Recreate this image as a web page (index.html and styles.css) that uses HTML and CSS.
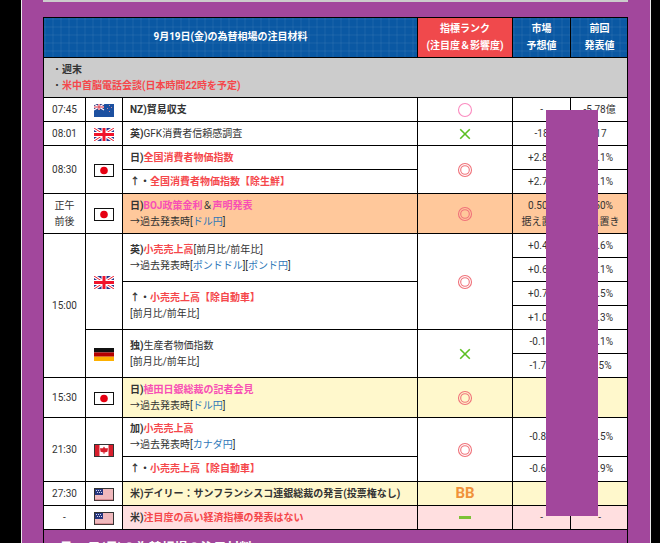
FILE: index.html
```html
<!DOCTYPE html>
<html lang="ja">
<head>
<meta charset="utf-8">
<title>為替相場の注目材料</title>
<link rel="stylesheet" href="styles.css">
</head>
<body>
<svg class="defs" width="0" height="0" aria-hidden="true">
  <defs>
    <symbol id="uk" viewBox="0 0 20 13">
      <rect width="20" height="13" fill="#27358c"/>
      <path d="M0 0L20 13M20 0L0 13" stroke="#fff" stroke-width="3.4"/>
      <path d="M0 0L20 13M20 0L0 13" stroke="#ee1c2e" stroke-width="1"/>
      <path d="M10 0V13M0 6.5H20" stroke="#fff" stroke-width="5"/>
      <path d="M10 0V13M0 6.5H20" stroke="#f0132b" stroke-width="3"/>
    </symbol>
    <symbol id="jp" viewBox="0 0 20 13">
      <rect x=".5" y=".5" width="19" height="12" fill="#fff" stroke="#111"/>
      <circle cx="10" cy="6.5" r="3.8" fill="#e60012"/>
    </symbol>
    <symbol id="nz" viewBox="0 0 20 13">
      <rect width="20" height="13" fill="#1c50a0"/>
      <rect width="10" height="6" fill="#3a3f86"/>
      <path d="M0 0L10 6M10 0L0 6" stroke="#fff" stroke-width="1.2"/>
      <path d="M5 0V6M0 3H10" stroke="#fff" stroke-width="2"/>
      <path d="M5 0V6M0 3H10" stroke="#d8283c" stroke-width="1"/>
      <path d="M15 1h1v1h-1zM13 4h1v1h-1zM17 3h1v1h-1zM15 7h1v1h-1z" fill="#c98a9a"/>
    </symbol>
    <symbol id="de" viewBox="0 0 20 13">
      <rect width="20" height="4.4" fill="#111"/>
      <rect y="4.4" width="20" height="4.3" fill="#b50000"/>
      <rect y="8.7" width="20" height="4.3" fill="#fdb000"/>
    </symbol>
    <symbol id="ca" viewBox="0 0 20 13">
      <rect x=".5" y=".5" width="19" height="12" fill="#fff" stroke="#333"/>
      <rect x="1" y="1" width="4.5" height="11" fill="#d81e2c"/>
      <rect x="14.5" y="1" width="4.5" height="11" fill="#d81e2c"/>
      <path d="M10 2.6L11.2 4.2L14 4.2L13.4 7.8L10.4 8.6V10H9.6V8.6L6.6 7.8L6 4.2L8.8 4.2Z" fill="#d81e2c"/>
    </symbol>
    <symbol id="us" viewBox="0 0 20 13">
      <rect x=".5" y=".5" width="19" height="12" fill="#fff" stroke="#333"/>
      <path d="M1 2H19M1 4H19M1 6H19M1 8H19M1 10H19" stroke="#e0737a" stroke-width="1"/>
      <path d="M1 11.7H19" stroke="#c4505a" stroke-width=".8"/>
      <rect x="1" y="1" width="8" height="6" fill="#27367f"/>
      <path d="M2 2h1v1h-1zM4 2h1v1h-1zM6 2h1v1h-1zM3 4h1v1h-1zM5 4h1v1h-1zM7 4h1v1h-1z" fill="#d5daf0"/>
    </symbol>
    <symbol id="double" viewBox="0 0 16 16">
      <circle cx="8" cy="8" r="6.5" fill="none" stroke="#f0727a" stroke-width="1.1"/>
      <circle cx="8" cy="8" r="4.3" fill="none" stroke="#f0727a" stroke-width="1.1"/>
    </symbol>
    <symbol id="single" viewBox="0 0 16 16">
      <circle cx="8" cy="8" r="6.5" fill="none" stroke="#fb8cc0" stroke-width="1.1"/>
    </symbol>
    <symbol id="cross" viewBox="0 0 16 16">
      <path d="M3.2 3.2L12.8 12.8M12.8 3.2L3.2 12.8" fill="none" stroke="#5cbf22" stroke-width="1.6"/>
    </symbol>
  </defs>
</svg>
<main class="page">
  <div class="top-strip"></div>
  <section class="panel">
    <table class="rates">
      <colgroup>
        <col class="c-time"><col class="c-flag"><col class="c-title"><col class="c-rank"><col class="c-val"><col class="c-prev">
      </colgroup>
      <thead>
        <tr class="head">
          <th colspan="3" class="grid-bg">9月19日(金)の為替相場の注目材料</th>
          <th class="rank-head">指標ランク<br>(注目度＆影響度)</th>
          <th class="grid-bg">市場<br>予想値</th>
          <th class="grid-bg">前回<br>発表値</th>
        </tr>
      </thead>
      <tbody>
        <tr class="notice"><td colspan="6">・<b>週末</b><br>・<b class="red">米中首脳電話会談(日本時間22時を予定)</b></td></tr>
        <tr class="r24">
          <td class="ctr">07:45</td>
          <td class="ctr"><svg class="flag"><use href="#nz"/></svg></td>
          <td class="ttl"><b>NZ)貿易収支</b></td>
          <td class="ctr"><svg class="mark"><use href="#single"/></svg></td>
          <td class="ctr">-</td><td class="ctr">-5.78億</td>
        </tr>
        <tr class="r24">
          <td class="ctr">08:01</td>
          <td class="ctr"><svg class="flag"><use href="#uk"/></svg></td>
          <td class="ttl"><b>英)</b>GFK消費者信頼感調査</td>
          <td class="ctr"><svg class="mark"><use href="#cross"/></svg></td>
          <td class="ctr">-18</td><td class="ctr">-17</td>
        </tr>
        <tr class="r24">
          <td class="ctr" rowspan="2">08:30</td>
          <td class="ctr" rowspan="2"><svg class="flag"><use href="#jp"/></svg></td>
          <td class="ttl"><b>日)</b><b class="red">全国消費者物価指数</b></td>
          <td class="ctr" rowspan="2"><svg class="mark"><use href="#double"/></svg></td>
          <td class="ctr">+2.8%</td><td class="ctr">+3.1%</td>
        </tr>
        <tr class="r24">
          <td class="ttl"><b>↑・</b><b class="red">全国消費者物価指数【除生鮮】</b></td>
          <td class="ctr">+2.7%</td><td class="ctr">+3.1%</td>
        </tr>
        <tr class="r40 orange">
          <td class="ctr white">正午<br>前後</td>
          <td class="ctr white"><svg class="flag"><use href="#jp"/></svg></td>
          <td class="ttl"><b>日)</b><b class="pink">BOJ政策金利</b>＆<b class="pink">声明発表</b><br>→過去発表時[<a>ドル円</a>]</td>
          <td class="ctr"><svg class="mark"><use href="#double"/></svg></td>
          <td class="ctr">0.50%<br>据え置き</td><td class="ctr">0.50%<br>据え置き</td>
        </tr>
        <tr class="r24">
          <td class="ctr" rowspan="6">15:00</td>
          <td class="ctr" rowspan="4"><svg class="flag"><use href="#uk"/></svg></td>
          <td class="ttl" rowspan="2"><b>英)</b><b class="red">小売売上高</b>[前月比/前年比]<br>→過去発表時[<a>ポンドドル</a>][<a>ポンド円</a>]</td>
          <td class="ctr" rowspan="4"><svg class="mark"><use href="#double"/></svg></td>
          <td class="ctr">+0.4%</td><td class="ctr">+0.6%</td>
        </tr>
        <tr class="r24"><td class="ctr">+0.6%</td><td class="ctr">+1.1%</td></tr>
        <tr class="r24">
          <td class="ttl" rowspan="2"><b>↑・</b><b class="red">小売売上高【除自動車】</b><br>[前月比/前年比]</td>
          <td class="ctr">+0.7%</td><td class="ctr">+0.5%</td>
        </tr>
        <tr class="r24"><td class="ctr">+1.0%</td><td class="ctr">+1.3%</td></tr>
        <tr class="r24">
          <td class="ctr" rowspan="2"><svg class="flag"><use href="#de"/></svg></td>
          <td class="ttl" rowspan="2"><b>独)</b>生産者物価指数<br>[前月比/前年比]</td>
          <td class="ctr" rowspan="2"><svg class="mark"><use href="#cross"/></svg></td>
          <td class="ctr">-0.1%</td><td class="ctr">+0.1%</td>
        </tr>
        <tr class="r24"><td class="ctr">-1.7%</td><td class="ctr">-1.5%</td></tr>
        <tr class="r40 yellow">
          <td class="ctr white">15:30</td>
          <td class="ctr white"><svg class="flag"><use href="#jp"/></svg></td>
          <td class="ttl"><b>日)</b><b class="pink">植田日銀総裁の記者会見</b><br>→過去発表時[<a>ドル円</a>]</td>
          <td class="ctr"><svg class="mark"><use href="#double"/></svg></td>
          <td class="ctr"></td><td class="ctr"></td>
        </tr>
        <tr class="r39">
          <td class="ctr" rowspan="2">21:30</td>
          <td class="ctr" rowspan="2"><svg class="flag"><use href="#ca"/></svg></td>
          <td class="ttl"><b>加)</b><b class="red">小売売上高</b><br>→過去発表時[<a>カナダ円</a>]</td>
          <td class="ctr" rowspan="2"><svg class="mark"><use href="#double"/></svg></td>
          <td class="ctr">-0.8%</td><td class="ctr">+0.5%</td>
        </tr>
        <tr class="r25">
          <td class="ttl"><b>↑・</b><b class="red">小売売上高【除自動車】</b></td>
          <td class="ctr">-0.6%</td><td class="ctr">+0.9%</td>
        </tr>
        <tr class="r24 yellow">
          <td class="ctr white">27:30</td>
          <td class="ctr white"><svg class="flag"><use href="#us"/></svg></td>
          <td class="ttl"><b>米)デイリー：サンフランシスコ連銀総裁の発言(投票権なし)</b></td>
          <td class="ctr"><span class="bb">BB</span></td>
          <td class="ctr"></td><td class="ctr"></td>
        </tr>
        <tr class="r24 rose">
          <td class="ctr white">-</td>
          <td class="ctr white"><svg class="flag"><use href="#us"/></svg></td>
          <td class="ttl"><b>米)</b><b class="red">注目度の高い経済指標の発表はない</b></td>
          <td class="ctr"><span class="dash"></span></td>
          <td class="ctr">-</td><td class="ctr">-</td>
        </tr>
      </tbody>
    </table>
    <h2 class="next">9月22日(月)の為替相場の注目材料</h2>
  </section>
  <div class="mask"></div>
</main>
</body>
</html>
```
FILE: styles.css
```css
* { box-sizing: border-box; }
html, body { margin: 0; height: 543px; overflow: hidden; background: #000; }
body {
  font-family: Roboto, "Noto Sans CJK JP", sans-serif;
  font-size: 10px;
  line-height: 16px;
  color: #333;
  padding-left: 21px;
}
.defs { position: absolute; }
.page {
  position: relative;
  width: 630px;
  height: 543px;
  padding: 0 22px 0 21px;
  background: #a2479c;
  border-left: 1px solid #e8e8e8;
  border-right: 1px solid #e8e8e8;
  overflow: hidden;
}
.top-strip { height: 2px; width: 585px; background: #ccc; }
.panel {
  margin-top: 15px;
  width: 585px;
  height: 526px;
  border-left: 1px solid #000;
  border-right: 1px solid #000;
  overflow: hidden;
}
.rates {
  width: 585px;
  margin-left: -1px;
  border-collapse: collapse;
  table-layout: fixed;
  background: #fff;
}
.c-time { width: 42px; }
.c-flag { width: 37px; }
.c-title { width: 295px; }
.c-rank { width: 95px; }
.c-val { width: 58px; }
.c-prev { width: 58px; }
th, td { border: 1px solid #000; padding: 0; vertical-align: middle; }
.head { height: 40px; }
th { color: #fff; font-weight: 700; text-align: center; line-height: 17px; padding-bottom: 2px; }
.grid-bg {
  background-color: #0a58a3;
  background-image:
    linear-gradient(rgba(255,255,255,.07) 1px, transparent 1px),
    linear-gradient(90deg, rgba(255,255,255,.07) 1px, transparent 1px);
  background-size: 8px 8px;
}
.rank-head { background: #f0494c; }
.notice { height: 40px; background: #ccc; }
.notice td { padding-left: 8px; }
.r24 { height: 24px; }
.r25 { height: 25px; }
.r39 { height: 39px; }
.r40 { height: 40px; }
.ctr { text-align: center; }
.ttl { padding-left: 7px; }
.red { color: #f5474b; }
.pink { color: #f74fb5; }
a { color: #2d77b8; }
.orange { background: #ffc89b; }
.yellow { background: #fff8cc; }
.rose { background: #ffdfe0; }
.white { background: #fff; }
.flag { display: block; width: 20px; height: 13px; margin: 2px auto 0; }
.mark { display: block; width: 16px; height: 16px; margin: 0 auto; }
.bb { font-size: 15px; font-weight: 700; color: #f0923a; }
.dash { display: block; width: 12px; height: 3px; margin: 0 auto; background: #7cc236; }
.next {
  margin: 0;
  padding: 9px 8px 0;
  color: #fff;
  font-size: 13px;
  line-height: 18px;
  font-weight: 700;
}
.mask {
  position: absolute;
  left: 524px;
  top: 110px;
  width: 52px;
  height: 406px;
  background: #a2479c;
}
```
